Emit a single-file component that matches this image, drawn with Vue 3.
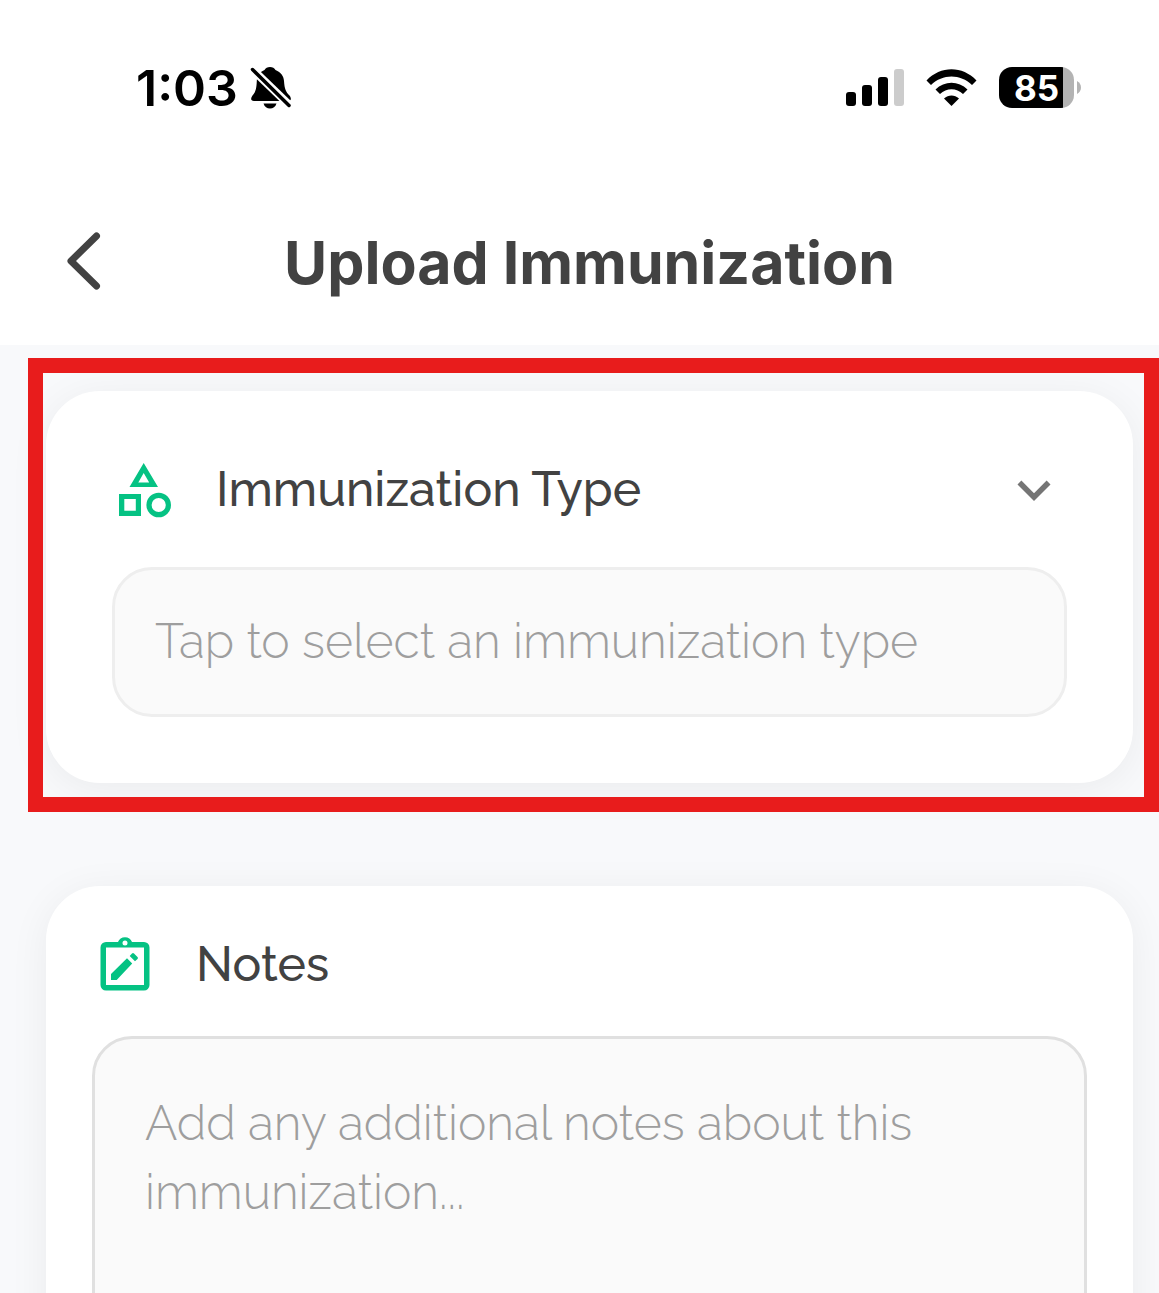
<script setup>
import { ref } from 'vue'

const immunizationType = ref('')
const notes = ref('')
const bars = [14, 21, 29, 37]
</script>

<template>
  <div class="page">
    <div class="status-bar">
      <div class="status-left">
        <span class="time">1:03</span>
        <svg class="bell" viewBox="0 0 42 44" aria-hidden="true">
          <path d="M20 1c-2.500 0-4.500 1.200-5.500 3C9 6.500 7 10 6.800 15c-.3 8-1.300 11-4.300 14.500C.5 32 .5 35 4 35h34c3.500 0 3.500-3 1.500-5.500C36 26 34.500 23 34 15c-.3-5-3-8.500-8.500-11-1-1.800-3-3-5.500-3z" />
          <path d="M13.500 37.500h13c-1 3.500-3.500 5-6.500 5s-5.500-1.500-6.500-5z" />
          <path d="M1 2l40 38.500" stroke="#fff" stroke-width="8" />
          <path d="M2.500 3.500l36.500 36" stroke="#000" stroke-width="3.500" stroke-linecap="round" />
        </svg>
      </div>
      <div class="status-right">
        <div class="signal">
          <span v-for="(h, i) in bars" :key="i" :class="{ off: i === 3 }" :style="{ height: h + 'px' }"></span>
        </div>
        <svg class="wifi" viewBox="0 0 50 38" aria-hidden="true">
          <path d="M0 11.500C14-3.500 36-3.500 50 11.500L45.500 16C34 4.500 16 4.500 4.500 16z" />
          <path d="M9 20.500c9-9 23-9 32 0L36.500 25c-6.500-6.500-16.500-6.500-23 0z" />
          <path d="M17.500 29.500c4.500-4 10.500-4 15 0L25 37z" />
        </svg>
        <div class="battery">
          <span class="battery-body">85</span>
          <svg class="battery-tip" viewBox="0 0 4 13" aria-hidden="true">
            <path d="M0 0c5.300 2.500 5.300 10.500 0 13z" />
          </svg>
        </div>
      </div>
    </div>

    <header class="header">
      <button class="back" aria-label="Back">
        <svg viewBox="0 0 66 66" aria-hidden="true">
          <path d="M50.500 9L25 34l25.500 25" />
        </svg>
      </button>
      <h1 class="title">Upload Immunization</h1>
    </header>

    <main class="content">
      <section class="card type-card">
        <div class="card-head">
          <svg class="icon" viewBox="0 0 66 66" aria-hidden="true">
            <path fill-rule="evenodd" d="M31.700 6L17.500 30h28.500zM31.700 16l5.500 9.500H26.300zM7 37h22v22H7zM12.300 42v11.700h11.500V42z" />
            <circle cx="46.700" cy="48" r="9.700" fill="none" stroke="#05c283" stroke-width="5.200" />
          </svg>
          <label class="label" for="type">Immunization Type</label>
          <button class="toggle" aria-label="Toggle">
            <svg viewBox="0 0 24 24" aria-hidden="true">
              <path d="M7.410 8.590L12 13.170l4.590-4.580L18 10l-6 6-6-6z" />
            </svg>
          </button>
        </div>
        <select id="type" v-model="immunizationType" class="field select">
          <option value="">Tap to select an immunization type</option>
        </select>
      </section>

      <section class="card notes-card">
        <div class="card-head">
          <svg class="icon" viewBox="0 0 66 66" aria-hidden="true">
            <path fill-rule="evenodd" d="M14 10h12a7.500 7.500 0 0 1 14 0h12a5.500 5.500 0 0 1 5.500 5.500v37.500a5.500 5.500 0 0 1-5.500 5.500H14A5.500 5.500 0 0 1 8.500 53V15.500A5.500 5.500 0 0 1 14 10zM14 15.500V53h38V15.500zM33 8.500a2.500 2.500 0 1 0 0 5 2.500 2.500 0 0 0 0-5z" />
            <path d="M19 42L35 26.200l5.200 5.200L24.700 48H19zM37.700 24l2.300-2.500q1-1 2 0l3.500 3.500q1 1 0 2L43 29.300z" />
          </svg>
          <label class="label" for="notes">Notes</label>
        </div>
        <textarea
          id="notes"
          v-model="notes"
          class="field textarea"
          rows="4"
          placeholder="Add any additional notes about this immunization..."
        ></textarea>
      </section>
    </main>
  </div>
</template>

<style>
body {
  margin: 0;
  background: #f8f9fb;
}
</style>

<style scoped>
.page {
  box-sizing: border-box;
  height: 100vh;
  overflow: hidden auto;
  scrollbar-width: none;
  background: #f8f9fb;
  color: #424242;
  font-family: Raleway, Lato, "Open Sans", sans-serif;
}
button {
  padding: 0;
  border: none;
  background: none;
  cursor: pointer;
}
svg {
  display: block;
}
.status-bar {
  display: flex;
  align-items: center;
  justify-content: space-between;
  height: 175px;
  padding: 0 78px 0 136px;
  background: #fff;
  color: #000;
  font-family: Inter, sans-serif;
}
.status-left,
.status-right {
  display: flex;
  align-items: center;
}
.status-left {
  gap: 12px;
}
.status-right {
  gap: 22px;
}
.time {
  font-size: 50px;
  font-weight: 600;
  line-height: 60px;
}
.bell {
  width: 42px;
  height: 44px;
}
.signal {
  display: flex;
  align-items: flex-end;
  gap: 6px;
}
.signal span {
  width: 10px;
  border-radius: 3px;
  background: #000;
}
.signal .off {
  background: #ccc;
}
.wifi {
  width: 51px;
  height: 38px;
}
.battery {
  display: flex;
  align-items: center;
  gap: 3px;
}
.battery-body {
  width: 75px;
  height: 41px;
  border-radius: 13px;
  background: linear-gradient(to right, #000 64px, #b3b3b3 64px);
  color: #fff;
  font-size: 35px;
  font-weight: 700;
  line-height: 42px;
  text-align: center;
}
.battery-tip {
  width: 4px;
  height: 13px;
  fill: #b3b3b3;
}
.header {
  display: grid;
  grid-template-columns: 66px 1fr 66px;
  align-items: center;
  height: 170px;
  padding: 0 26px 0 46px;
  background: #fff;
}
.back svg {
  width: 66px;
  height: 66px;
  fill: none;
  stroke: #424242;
  stroke-width: 7;
  stroke-linecap: round;
  stroke-linejoin: round;
}
.title {
  margin: 0;
  padding-top: 6px;
  font-family: Inter, sans-serif;
  font-size: 59px;
  font-weight: 700;
  line-height: 72px;
  text-align: center;
}
.content {
  display: flex;
  flex-direction: column;
  gap: 103px;
  padding: 46px 26px 46px 46px;
}
.card {
  position: relative;
  border-radius: 54px;
  background: #fff;
  box-shadow: 0 6px 40px rgba(0, 0, 0, 0.06);
}
.type-card {
  padding: 66px;
}
/* highlight frame */
.type-card::after {
  content: "";
  position: absolute;
  inset: -33px -26px -29px -18px;
  border: 15px solid #e81c1c;
  pointer-events: none;
}
.notes-card {
  padding: 46px;
}
.card-head {
  display: flex;
  align-items: center;
  gap: 38px;
}
.icon {
  width: 66px;
  height: 66px;
  fill: #05c283;
}
.label {
  flex: 1;
  padding-bottom: 2px;
  font-size: 48px;
  font-weight: 500;
  line-height: 60px;
}
.toggle svg {
  width: 66px;
  height: 66px;
  fill: #757575;
}
.field {
  display: block;
  box-sizing: border-box;
  width: 100%;
  border: 3px solid #eee;
  border-radius: 40px;
  background: #fafafa;
  color: #9e9e9e;
  font-family: inherit;
  font-size: 48px;
  font-weight: 300;
  outline: none;
}
.select {
  height: 150px;
  margin-top: 44px;
  padding: 0 40px 2px;
  appearance: none;
}
.textarea {
  margin-top: 38px;
  padding: 50px;
  border-color: #e0e0e0;
  line-height: 69px;
  resize: none;
}
.textarea::placeholder {
  color: #9e9e9e;
}
</style>
